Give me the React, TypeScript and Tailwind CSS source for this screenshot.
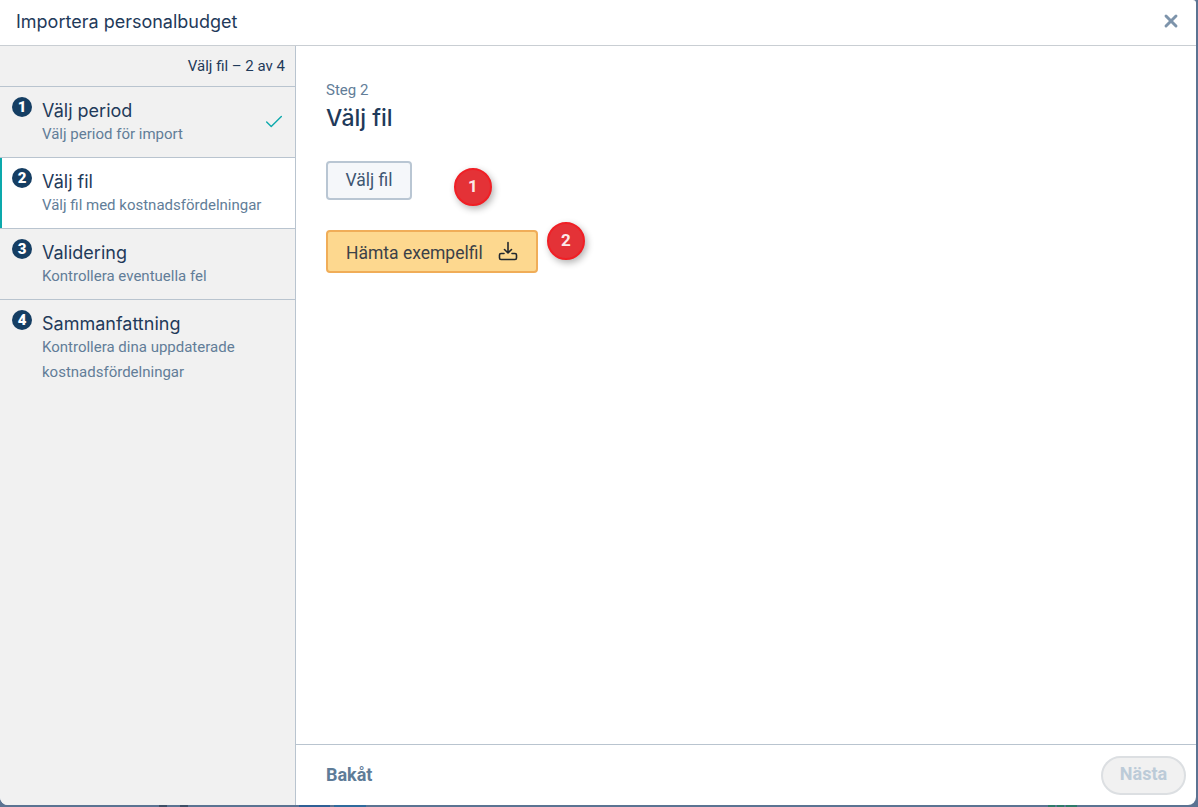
import { Check, X } from "lucide-react";

const STEPS = [
  { n: 1, title: "Välj period", desc: "Välj period för import", done: true },
  { n: 2, title: "Välj fil", desc: "Välj fil med kostnadsfördelningar", active: true },
  { n: 3, title: "Validering", desc: "Kontrollera eventuella fel" },
  { n: 4, title: "Sammanfattning", desc: "Kontrollera dina uppdaterade kostnadsfördelningar" },
];

function Badge({ n, className }: { n: number; className: string }) {
  return (
    <div className={`absolute flex h-[38px] w-[38px] items-center justify-center rounded-full border-2 border-[#f01f25] bg-[#e43237] text-[17px] font-bold text-[#fbe9e9] shadow-[2px_3px_7px_rgba(0,0,0,0.3)] ${className}`}>
      {n}
    </div>
  );
}

export default function App() {
  return (
    <div className="h-[807px] w-[1198px] overflow-hidden bg-[#5b7392] font-['Roboto',sans-serif]">
      <div className="flex h-[805px] w-[1196px] flex-col overflow-hidden rounded-b-lg rounded-tr-[3px] bg-white">
        <header className="flex h-[46px] shrink-0 items-center justify-between border-b border-[#c9ced3] pb-[3px] pl-4 pr-[15px]">
          <h2 className="font-['Inter',sans-serif] text-[18px] text-[#1f3a5a]">Importera personalbudget</h2>
          <X className="h-5 w-5 text-[#7d94ab]" strokeWidth={3.5} />
        </header>

        <div className="flex min-h-0 flex-1">
          <aside className="w-[296px] shrink-0 border-r border-[#b9c4cf] bg-[#f1f1f1]">
            <div className="h-[41px] border-b border-[#b9c4cf] pr-[10px] pt-[11px] text-right text-[15px] leading-[18px] text-[#1f3a5a]">
              Välj fil – 2 av 4
            </div>
            {STEPS.map((s) => (
              <div
                key={s.n}
                className={`relative flex gap-[10px] border-b border-[#b9c4cf] pb-[10px] pl-3 pr-4 pt-[11px] last:border-b-0 ${s.active ? "bg-white" : ""}`}
              >
                {s.active && <div className="absolute bottom-0 left-0 top-0 w-[2px] bg-[#0ca9ac]" />}
                <div className="-mt-px flex h-5 w-5 shrink-0 items-center justify-center rounded-full bg-[#153e63] text-[15px] font-black leading-none text-white">
                  {s.n}
                </div>
                <div className="min-w-0 flex-1">
                  <div className="h-6 pt-px font-['Inter',sans-serif] text-[18px] leading-6 text-[#1f3a5a]">{s.title}</div>
                  <div className="text-[15px] leading-[25px] text-[#627d98]">{s.desc}</div>
                </div>
                {s.done && <Check className="absolute right-[10px] top-[24px] h-[22px] w-[22px] text-[#0ca9ac]" strokeWidth={1.5} />}
              </div>
            ))}
          </aside>

          <div className="flex min-w-0 flex-1 flex-col">
            <main className="relative flex-1 pl-[30px] pt-[36px]">
              <p className="text-[15px] leading-[17px] text-[#627d98]">Steg 2</p>
              <h1 className="mt-[5px] font-['Inter',sans-serif] text-[23px] font-medium leading-7 text-[#1f3a5a]">Välj fil</h1>
              <button className="mt-[29px] block h-[39px] w-[86px] rounded border-2 border-[#b9c6d3] bg-[#f5f7fa] text-[17.5px] text-[#3e5672]">
                Välj fil
              </button>
              <button className="mt-[30px] flex h-[43px] w-[212px] items-center gap-[15px] rounded border-2 border-[#f0ad58] bg-[#fdd88f] pl-[18px] text-[17.5px] text-[#3b4148]">
                <span className="pt-[3px]">Hämta exempelfil</span>
                <svg className="-mt-[2px] h-[20px] w-[20px]" viewBox="0 0 20 20" fill="none" stroke="#23282e" strokeWidth="1.6" strokeLinecap="round" strokeLinejoin="round">
                  <path d="M10 1.5v10.5M6.5 8.5l3.5 3.5 3.5-3.5" />
                  <path d="M6 12.5H3A1.5 1.5 0 0 0 1.5 14v3A1.5 1.5 0 0 0 3 18.5h14a1.5 1.5 0 0 0 1.5-1.5v-3a1.5 1.5 0 0 0-1.5-1.5h-3" />
                </svg>
              </button>
              <Badge n={1} className="left-[158px] top-[122px]" />
              <Badge n={2} className="left-[251px] top-[176px]" />
            </main>
            <footer className="flex h-[61px] shrink-0 items-center justify-between border-t border-[#b9c4cf] pl-[30px] pr-[10px]">
              <button className="pb-[2px] text-[18px] font-bold text-[#5f7c98]">Bakåt</button>
              <button className="h-[39px] w-[85px] rounded-[20px] border-2 border-[#dcdfe2] bg-[#f1f1f1] pb-[3px] text-[18px] font-bold text-[#bccbd8]">
                Nästa
              </button>
            </footer>
          </div>
        </div>
      </div>
      {/* page behind the dialog, only a sliver shows */}
      <div className="flex h-[2px]">
        <div className="ml-[159px] w-2 bg-[#3d4f66]" />
        <div className="ml-[13px] w-2 bg-[#3d4f66]" />
        <div className="ml-[111px] w-[31px] bg-[#2f5f95]" />
        <div className="ml-1 w-8 bg-[#2f6a9c]" />
        <div className="ml-[682px] w-[7px] bg-[#2d7a6a]" />
        <div className="ml-[2px] w-[7px] bg-[#2d7a6a]" />
        <div className="ml-[2px] w-[11px] bg-[#2d7a6a]" />
      </div>
    </div>
  );
}
